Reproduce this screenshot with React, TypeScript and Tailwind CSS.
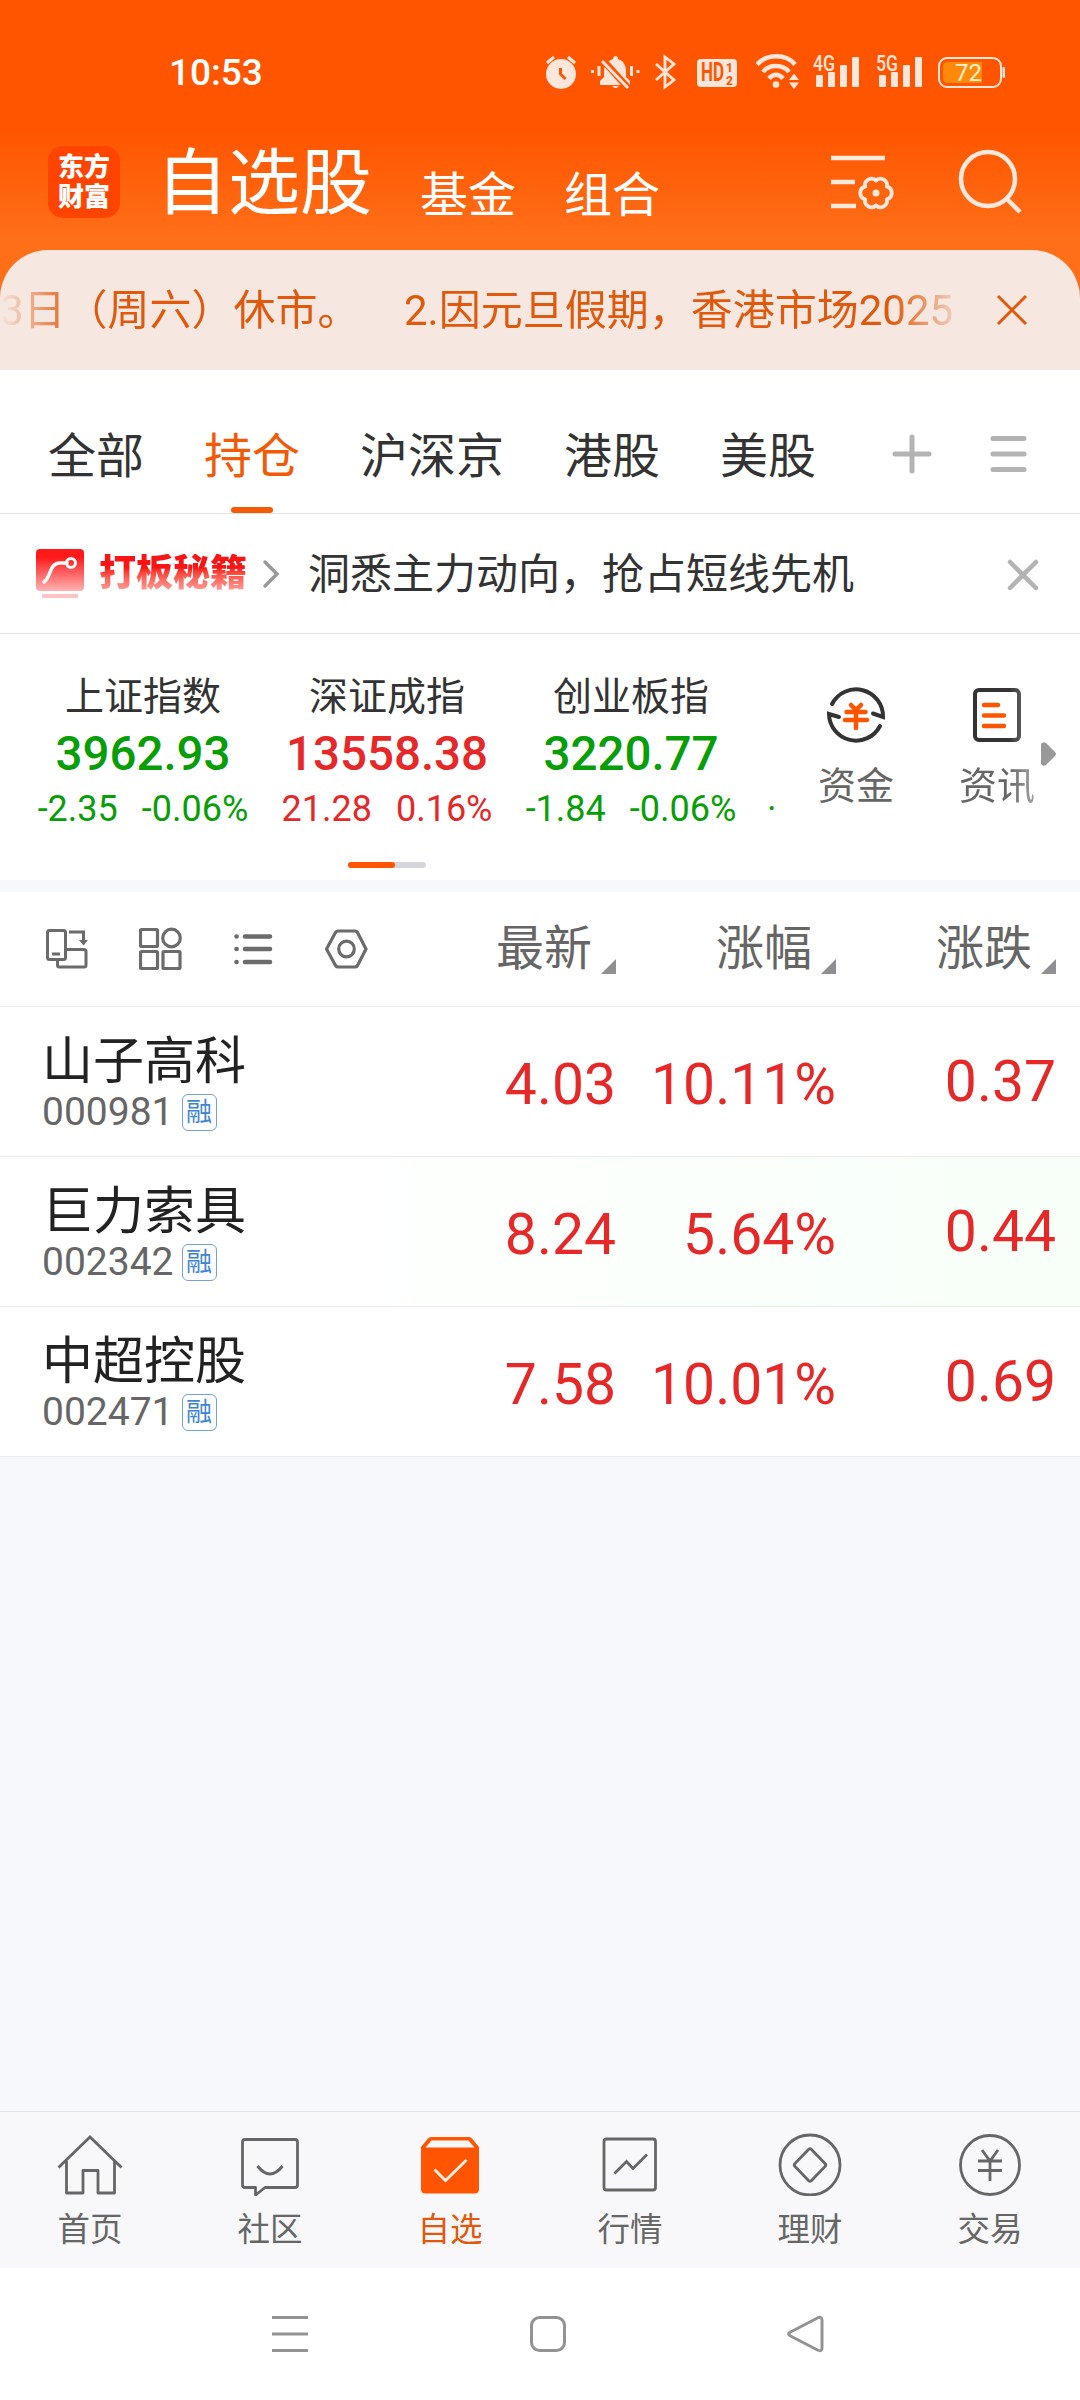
import type { ReactNode } from 'react'

const indices = [
  { name: '上证指数', value: '3962.93', change: '-2.35', percent: '-0.06%', up: false },
  { name: '深证成指', value: '13558.38', change: '21.28', percent: '0.16%', up: true },
  { name: '创业板指', value: '3220.77', change: '-1.84', percent: '-0.06%', up: false },
]

const stocks = [
  { name: '山子高科', code: '000981', price: '4.03', percent: '10.11%', change: '0.37', flash: false },
  { name: '巨力索具', code: '002342', price: '8.24', percent: '5.64%', change: '0.44', flash: true },
  { name: '中超控股', code: '002471', price: '7.58', percent: '10.01%', change: '0.69', flash: false },
]

const tabs = ['全部', '持仓', '沪深京', '港股', '美股']

function Signal({ label }: { label: string }) {
  return (
    <svg className="overflow-visible" width="47" height="36" viewBox="0 0 47 36" fill="#ffe6da">
      <text x="0" y="17" fontSize="22" fontWeight="500" textLength="22" lengthAdjust="spacingAndGlyphs">{label}</text>
      <rect x="3" y="21" width="7" height="12" rx="1" />
      <rect x="15" y="18" width="7" height="15" rx="1" />
      <rect x="27" y="11" width="7" height="22" rx="1" />
      <rect x="39" y="3" width="7" height="30" rx="1" />
    </svg>
  )
}

function StatusBar() {
  return (
    <div className="flex h-[130px] items-start pt-[54px] pl-[169px]">
      <span className="w-[376px] text-[37px] leading-[38px] font-medium text-white">10:53</span>
      {/* alarm */}
      <svg className="mr-[14px]" width="32" height="36" viewBox="0 0 32 36" fill="none">
        <circle cx="16" cy="20" r="15" fill="#ffe6da" />
        <path d="M2 9l7-6M30 9l-7-6" stroke="#ffe6da" strokeWidth="3" />
        <path d="M15.500 14v6l5 5" stroke="#ff5500" strokeWidth="3" />
      </svg>
      {/* muted bell */}
      <svg className="mr-[15px]" width="49" height="36" viewBox="0 0 49 36" fill="#ffe6da">
        <path d="M9 31v-4l4-4v-6c0-5 3-10 9-12 0-4 5-4 5 0 6 2 8 7 8 12v6l4 4v4z" />
        <path d="M21 32h7q-3 4-7 0z" />
        <path d="M11 5l27 30" stroke="#ff5500" strokeWidth="7" />
        <path d="M11 7l26 27" stroke="#ffe6da" strokeWidth="3" />
        <path d="M1.500 16v3M8 12v10M40.500 12v10M47 16v3" stroke="#ffe6da" strokeWidth="3" />
      </svg>
      {/* bluetooth */}
      <svg className="mr-[20px]" width="22" height="36" viewBox="0 0 22 36" fill="none" stroke="#ffe6da" strokeWidth="2.800">
        <path d="M1 10l18 16-9 7V3l9 7L1 26" />
      </svg>
      {/* HD */}
      <svg className="mr-[18px]" width="41" height="36" viewBox="0 0 41 36">
        <rect y="5" width="40" height="28" rx="4" fill="#ffe6da" />
        <text x="4" y="27" fontSize="25" fontWeight="700" fill="#ff5500" textLength="23" lengthAdjust="spacingAndGlyphs">HD</text>
        <text x="29" y="17.500" fontSize="12" fontWeight="800" fill="#ff5500">1</text>
        <text x="29" y="30.500" fontSize="12" fontWeight="800" fill="#ff5500">2</text>
      </svg>
      {/* wifi */}
      <svg className="mr-[13px]" width="44" height="36" viewBox="0 0 44 36" fill="none" stroke="#ffe6da" strokeWidth="4.500">
        <path d="M1 10.500C11-.500 30-.500 39 10.500M7 18c6-8 20-8 26 0M13 24.500c4-5 10-5 14 0" />
        <circle cx="20" cy="30.500" r="3.300" fill="#ffe6da" stroke="none" />
        <path d="M33 26h10l-5-6.500zM33 28.500h10l-5 6.500z" fill="#ffe6da" stroke="none" />
      </svg>
      <div className="mr-[16px]"><Signal label="4G" /></div>
      <div className="mr-[15px]"><Signal label="5G" /></div>
      {/* battery */}
      <svg width="68" height="36" viewBox="0 0 68 36">
        <rect x="1" y="4" width="62" height="29" rx="8" fill="none" stroke="#ffe6da" strokeWidth="2" />
        <path d="M10 8h34v21H10q-5 0-5-5V13q0-5 5-5z" fill="#ff8a0a" />
        <rect x="64.500" y="13" width="2.500" height="11" rx="1" fill="#ffe6da" />
        <text x="17" y="27" fontSize="24" fill="#fff0d0">72</text>
      </svg>
    </div>
  )
}

function Header() {
  return (
    <div className="flex h-[120px] items-start text-white">
      <div className="mt-[16px] ml-[48px] flex h-[72px] w-[72px] flex-col items-center justify-center rounded-[15px] bg-[#ff4400] text-[26px] leading-[30px] font-black">
        <span>东方</span>
        <span>财富</span>
      </div>
      <div className="mt-[18px] ml-[36px] flex items-start">
        <h1 className="text-[72px] leading-[72px] font-normal">自选股</h1>
        <span className="mt-[24px] ml-[48px] text-[48px] leading-none">基金</span>
        <span className="mt-[24px] ml-[48px] text-[48px] leading-none">组合</span>
      </div>
      <svg className="mt-[24px] ml-auto" width="64" height="58" viewBox="0 0 64 58" fill="none" stroke="#ffe9dc" strokeWidth="4.500">
        <path d="M0 4h54M0 28h24M0 52h25" />
        <path
          strokeLinejoin="round"
          strokeWidth="3.800"
          d="M55.800 45.300A6.500 6.500 0 0 1 45 51.500A6.500 6.500 0 0 1 34.200 45.300A6.500 6.500 0 0 1 34.200 32.700A6.500 6.500 0 0 1 45 26.500A6.500 6.500 0 0 1 55.800 32.700A6.500 6.500 0 0 1 55.800 45.300z"
        />
        <circle cx="45" cy="39" r="3.500" fill="#ffe9dc" stroke="none" />
      </svg>
      <svg className="mt-[19px] mr-[57px] ml-[63px]" width="65" height="66" viewBox="0 0 65 66" fill="none" stroke="#ffe9dc" strokeWidth="4.500">
        <circle cx="30" cy="30" r="27" />
        <path d="M48 49l14 14" />
      </svg>
    </div>
  )
}

function Notice() {
  return (
    <div className="flex h-[120px] items-center rounded-t-[48px] bg-[#f6e7e0] text-[#e0590c]">
      <div className="mt-[2px] flex w-[957px] overflow-hidden text-[42px] leading-[60px] whitespace-nowrap [mask-image:linear-gradient(to_right,transparent_0,black_76px,black_890px,transparent_968px)]">
        <span className="w-[404px] shrink-0">3日（周六）休市。</span>
        <span>2.因元旦假期，香港市场2025</span>
      </div>
      <svg className="ml-[39px]" width="32" height="32" viewBox="0 0 32 32" stroke="#e0590c" strokeWidth="3">
        <path d="M2 2l28 28M30 2L2 30" />
      </svg>
    </div>
  )
}

function Tabs() {
  return (
    <div className="flex h-[144px] items-center border-b border-[#e3e3e3] pl-[48px] text-[48px] text-[#333]">
      <div className="flex h-full gap-[60px]">
        {tabs.map((t) =>
          t === '持仓' ? (
            <div key={t} className="relative flex h-full items-center text-[#f25a05]">
              <span className="mt-[31px]">{t}</span>
              <div className="absolute bottom-0 left-[27px] h-[6px] w-[42px] rounded-full bg-[#f25a05]" />
            </div>
          ) : (
            <div key={t} className="flex h-full items-center">
              <span className="mt-[31px]">{t}</span>
            </div>
          )
        )}
      </div>
      <svg className="mt-[24px] ml-auto" width="40" height="40" viewBox="0 0 40 40" stroke="#b3b3b3" strokeWidth="5" strokeLinecap="round">
        <path d="M20 3v34M3 20h34" />
      </svg>
      <svg className="mt-[24px] mr-[53px] ml-[57px]" width="38" height="40" viewBox="0 0 38 40" stroke="#b3b3b3" strokeWidth="5" strokeLinecap="round">
        <path d="M4 4.500h31M4 20h31M4 35.500h31" />
      </svg>
    </div>
  )
}

function Promo() {
  return (
    <div className="flex h-[120px] items-center border-b border-[#e3e3e3] text-[#333]">
      <svg className="ml-[36px]" width="48" height="50" viewBox="0 0 48 50" fill="none">
        <defs>
          <linearGradient id="promo" x1="0" y1="0" x2="0" y2="1">
            <stop offset="0.200" stopColor="#ff1a1a" />
            <stop offset="1" stopColor="#ffb3b3" />
          </linearGradient>
        </defs>
        <rect width="48" height="42" rx="4" fill="url(#promo)" />
        <path d="M8 33c7-4 5-19 16-19h7" stroke="#fff" strokeWidth="3.500" strokeLinecap="round" />
        <circle cx="35" cy="14" r="4.500" stroke="#fff" strokeWidth="3" />
        <rect x="6" y="45" width="36" height="4" rx="1" fill="#fcc4c4" />
      </svg>
      <span className="ml-[15px] bg-gradient-to-b from-[#f81515] from-35% to-[#ffa8a8] to-100% bg-clip-text text-[37px] leading-[40px] font-black text-transparent">
        打板秘籍
      </span>
      <svg className="ml-[15px]" width="18" height="30" viewBox="0 0 18 30" fill="none" stroke="#999" strokeWidth="3.500" strokeLinecap="round">
        <path d="M3 3l12 12L3 27" />
      </svg>
      <span className="mt-[2px] ml-[28px] text-[42px]">洞悉主力动向，抢占短线先机</span>
      <svg className="mt-[2px] mr-[40px] ml-auto" width="34" height="34" viewBox="0 0 34 34" stroke="#b3b3b3" strokeWidth="4.500" strokeLinecap="round">
        <path d="M4 4l26 26M30 4L4 30" />
      </svg>
    </div>
  )
}

function Shortcut({ label, className, children }: { label: string; className: string; children: ReactNode }) {
  return (
    <div className={'flex shrink-0 flex-col items-center text-[38px] leading-[48px] text-[#666] ' + className}>
      <div className="mb-[17px] h-[60px]">{children}</div>
      {label}
    </div>
  )
}

function Indices() {
  return (
    <div className="h-[246px]">
      <div className="flex h-[228px]">
        <div className="flex w-[776px] shrink-0 pl-[21px]">
          {indices.map((x) => (
            <div key={x.name} className={(x.up ? 'text-[#e62828]' : 'text-[#089e08]') + ' flex w-[244px] shrink-0 flex-col items-center pt-[39px]'}>
              <span className="text-[39px] leading-[48px] text-[#333]">{x.name}</span>
              <span className="mt-[9px] text-[47.500px] leading-[48px] font-medium">{x.value}</span>
              <span className="mt-[7px] flex gap-[24px] text-[36px] leading-[48px]">
                <span>{x.change}</span>
                <span>{x.percent}</span>
              </span>
            </div>
          ))}
          <span className="mt-[151px] ml-[14px] text-[36px] leading-[48px] text-[#089e08]">·</span>
        </div>
        <Shortcut label="资金" className="ml-[42px] pt-[51px]">
          <svg width="60" height="60" viewBox="0 0 60 60" fill="none" stroke="#333" strokeWidth="4" strokeLinecap="round">
            <path d="M6 19A27 27 0 0 1 57 32l-10-3.500" />
            <path d="M54 41A27 27 0 0 1 3 29l10 3" />
            <path d="M25 20l5 5 5-5M20.500 27h19M19 35h22M30 26v17" stroke="#ff5500" strokeWidth="4.500" />
          </svg>
        </Shortcut>
        <Shortcut label="资讯" className="ml-[65px] pt-[51px] [mask-image:linear-gradient(to_right,black_65%,rgba(0,0,0,0.6))]">
          <svg width="60" height="60" viewBox="0 0 60 60" fill="none" stroke="#333" strokeWidth="4" strokeLinecap="round">
            <rect x="8" y="5" width="44" height="50" rx="4" />
            <path d="M17 20h14M17 30.500h20M17 41h20" stroke="#ff5500" strokeWidth="4.500" />
          </svg>
        </Shortcut>
        <svg className="mt-[108px] ml-[6px]" width="15" height="24" viewBox="0 0 15 24" fill="#999">
          <path d="M0 2Q2-1 5 1l9 9q2 2 0 4l-9 9q-3 2-5-1z" />
        </svg>
      </div>
      <div className="ml-[348px] h-[6px] w-[78px] rounded-full bg-[#d4d6dc]">
        <div className="h-full w-[47px] rounded-full bg-[#ff5500]" />
      </div>
    </div>
  )
}

function SortHead({ label, className }: { label: string; className: string }) {
  return (
    <div className={'flex justify-end text-[48px] leading-[64px] ' + className}>
      {label}
      <svg className="mt-[42px] ml-[9px]" width="15" height="15" viewBox="0 0 15 15" fill="#8e8e93">
        <path d="M15 0v15H0z" />
      </svg>
    </div>
  )
}

function Toolbar() {
  return (
    <div className="flex h-[115px] items-center border-b border-[#ececec] pr-[24px] pl-[46px] text-[#666]">
      <div className="flex gap-[49px]">
        {/* rotate screen */}
        <svg width="44" height="44" viewBox="0 0 44 44" fill="none" stroke="#6b6b6b" strokeWidth="3">
          <rect x="1.500" y="3.500" width="18" height="29" rx="2" />
          <path d="M6 27h8M20 22.500h18q2 0 2 2V38q0 2-2 2H13.500q-2 0-2-2v-5" />
          <path d="M23 5h14.500v9" />
          <path d="M33 13h9l-4.500 5.500z" fill="#6b6b6b" stroke="none" />
        </svg>
        <svg width="44" height="44" viewBox="0 0 44 44" fill="none" stroke="#6b6b6b" strokeWidth="3.200">
          <rect x="1.500" y="2.500" width="17" height="17" rx="1" />
          <circle cx="32.500" cy="11" r="8.800" />
          <rect x="1.500" y="24.500" width="17" height="17" rx="1" />
          <rect x="24" y="24.500" width="17" height="17" rx="1" />
        </svg>
        <svg width="44" height="44" viewBox="0 0 44 44" fill="none" stroke="#6b6b6b" strokeWidth="4.600" strokeLinecap="round">
          <path d="M13 9.500h25M13 22h25M13 35h25M4.500 9.500h.1M4.500 22h.1M4.500 35h.1" />
        </svg>
        <svg width="44" height="44" viewBox="0 0 44 44" fill="none" stroke="#6b6b6b" strokeWidth="3.200" strokeLinejoin="round">
          <path d="M13 4h17q1.500 0 2.500 1.500L41 22l-8.500 16.500Q31.500 40 30 40H13q-1.500 0-2.500-1.500L1.500 22l9-16.500Q11.500 4 13 4z" />
          <circle cx="21.500" cy="22" r="7.800" />
        </svg>
      </div>
      <SortHead label="最新" className="ml-auto w-[160px]" />
      <SortHead label="涨幅" className="w-[220px]" />
      <SortHead label="涨跌" className="w-[220px]" />
    </div>
  )
}

function StockRow({ stock }: { stock: (typeof stocks)[number] }) {
  return (
    <div
      className={
        'flex h-[150px] items-center border-b border-[#ececec] pr-[24px] pl-[42px] text-[57px] text-[#e62828] ' +
        (stock.flash ? 'bg-gradient-to-r from-white from-20% to-[#f7fff8]' : 'bg-white')
      }
    >
      <div className="mt-[2px]">
        <div className="text-[51px] leading-[58px] text-[#222]">{stock.name}</div>
        <div className="mt-px flex items-center text-[39px] leading-[40px] text-[#666]">
          {stock.code}
          <span className="ml-[8px] flex h-[37px] w-[35px] items-center justify-center rounded-[6px] border border-[#6fa3d8] text-[26px] leading-none text-[#3f86d2]">
            融
          </span>
        </div>
      </div>
      <span className="mt-[6px] ml-auto">{stock.price}</span>
      <span className="mt-[6px] w-[220px] text-right">{stock.percent}</span>
      <span className="w-[220px] text-right">{stock.change}</span>
    </div>
  )
}

function NavItem({ label, active, children }: { label: string; active?: boolean; children: ReactNode }) {
  return (
    <div className={'flex flex-1 flex-col items-center text-[32.500px] leading-[40px] ' + (active ? 'text-[#e0590c]' : 'text-[#666]')}>
      <svg className="mt-[20px] mb-[14px]" width="66" height="64" viewBox="0 0 66 64" fill="none" stroke="#666" strokeWidth="2.800">
        {children}
      </svg>
      {label}
    </div>
  )
}

function BottomNav() {
  return (
    <div className="flex h-[157px] border-t border-[#e3e3e6] bg-[#f8f8fa]">
      <NavItem label="首页">
        <path d="M1.500 35.500L33 5L64.500 35.500" />
        <path d="M9.500 29v32h16.500V38.500h15V61h16.500V29" strokeLinejoin="round" />
      </NavItem>
      <NavItem label="社区">
        <path d="M8 7.500h50q2.500 0 2.500 2.500v43q0 2.500-2.500 2.500H28l-9.500 7.500v-7.500H8q-2.500 0-2.500-2.500V10q0-2.500 2.500-2.500z" strokeLinejoin="round" />
        <path d="M20.500 34q12.500 16 25 0" strokeWidth="3" />
      </NavItem>
      <NavItem label="自选" active>
        <path d="M14 5h38q2 0 3 1.500L62 15v42q0 4.500-4.500 4.500h-49Q4 61.500 4 57V15l7-8.500Q12 5 14 5z" fill="#ff5500" stroke="none" />
        <path d="M14.500 8.500h37l6 7h-49z" fill="#f8f8fa" stroke="none" />
        <path d="M17.500 37.500l11 11L49.500 28" stroke="#fff0e6" />
      </NavItem>
      <NavItem label="行情">
        <rect x="7" y="7" width="51.500" height="51" rx="2.500" />
        <path d="M17.500 41.500L29.500 29.500l6.500 7L50 22.500" />
      </NavItem>
      <NavItem label="理财">
        <circle cx="33" cy="33" r="30" />
        <path d="M31.500 17.500q1.500-1.500 3 0l13.500 14q1.500 1.500 0 3l-13.500 14q-1.500 1.500-3 0l-13.500-14q-1.500-1.500 0-3z" />
      </NavItem>
      <NavItem label="交易">
        <circle cx="33" cy="33" r="29.500" />
        <path d="M25 18l8 11 8-11M21 29h24M21 38.500h24M33 29v20" />
      </NavItem>
    </div>
  )
}

function SystemNav() {
  return (
    <div className="flex h-[132px] items-start bg-white pt-[46px] pl-[270px]">
      <svg width="40" height="40" viewBox="0 0 40 40" stroke="#939393" strokeWidth="3.200">
        <path d="M2 3.500h36M2 20h36M2 36.500h36" />
      </svg>
      <svg className="ml-[218px]" width="40" height="40" viewBox="0 0 40 40" fill="none" stroke="#939393" strokeWidth="3">
        <rect x="3.500" y="3.500" width="33" height="33" rx="8" />
      </svg>
      <svg className="ml-[218px]" width="40" height="40" viewBox="0 0 40 40" fill="none" stroke="#939393" strokeWidth="3">
        <path d="M31.500 4q4.500-2 4.500 2v28q0 4-4.500 2L4.500 22q-4-2 0-4z" />
      </svg>
    </div>
  )
}

export default function App() {
  return (
    <div className="flex h-[2400px] w-[1080px] flex-col overflow-hidden bg-[#f7f8fb] font-['Roboto','Noto_Sans_CJK_SC',sans-serif]">
      <div className="bg-[#ff5500] bg-[linear-gradient(to_bottom,#ff5500_130px,#ff6f18_240px)]">
        <StatusBar />
        <Header />
        <Notice />
      </div>
      <div className="bg-white">
        <Tabs />
        <Promo />
        <Indices />
      </div>
      <div className="mt-[12px] bg-white">
        <Toolbar />
        {stocks.map((s) => (
          <StockRow key={s.code} stock={s} />
        ))}
      </div>
      <div className="mt-auto">
        <BottomNav />
        <SystemNav />
      </div>
    </div>
  )
}
